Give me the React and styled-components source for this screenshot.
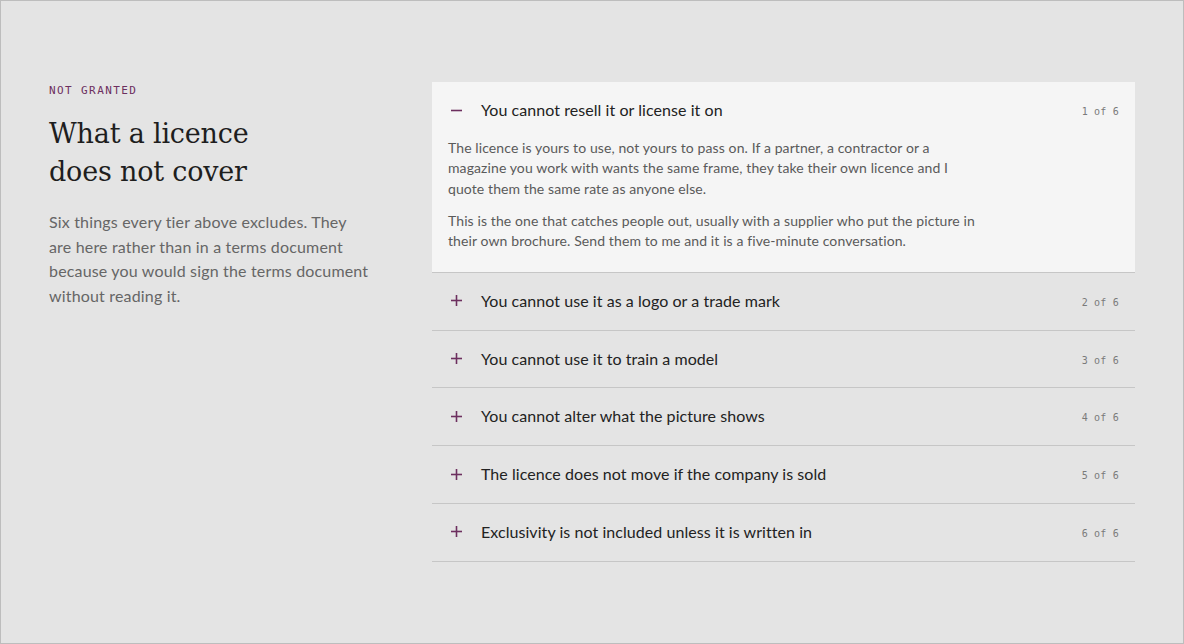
import { useState } from "react";
import styled, { createGlobalStyle } from "styled-components";

const GlobalStyle = createGlobalStyle`
  html, body {
    margin: 0;
    padding: 0;
    background: #e4e4e4;
  }
  * {
    box-sizing: border-box;
  }
`

const Page = styled.div`
  min-height: 100vh;
  border: 1px solid #bdbdbd;
  background: #e4e4e4;
  padding: 81px 48px 40px 48px;
  display: grid;
  grid-template-columns: 320px 1fr;
  column-gap: 63px;
  align-items: start;
  font-family: Lato, "Noto Sans", sans-serif;
`

const Intro = styled.div`
  display: flex;
  flex-direction: column;
`

const Eyebrow = styled.div`
  font-family: "DejaVu Sans Mono", "Liberation Mono", monospace;
  font-size: 11px;
  line-height: 18px;
  letter-spacing: 1.4px;
  color: #6d2f5f;
  text-transform: uppercase;
`

const Heading = styled.h2`
  margin: 15px 0 0 0;
  font-family: "DejaVu Serif", "Liberation Serif", serif;
  font-weight: 400;
  font-size: 27px;
  line-height: 38px;
  letter-spacing: -0.2px;
  color: #1e1e1e;
`

const Lede = styled.p`
  margin: 19px 0 0 0;
  font-size: 16px;
  line-height: 24.7px;
  letter-spacing: 0.17px;
  color: #666666;
`

const List = styled.div`
  display: flex;
  flex-direction: column;
`

const Item = styled.div`
  background: ${(p) => (p.$open ? "#f5f5f5" : "transparent")};
  border-bottom: 1px solid #c6c6c6;
`

const Header = styled.button`
  width: 100%;
  display: flex;
  align-items: center;
  gap: 17px;
  padding: 16px 16px 16.8px 16px;
  border: none;
  background: none;
  cursor: pointer;
  text-align: left;
  font-family: inherit;

  &:focus {
    outline: none;
  }
`

const Sign = styled.span`
  width: 16px;
  display: flex;
  justify-content: center;
  color: #6d2f5f;
`

const Title = styled.span`
  flex: 1;
  font-size: 16px;
  line-height: 24px;
  letter-spacing: 0.06px;
  color: #222222;
`

const Count = styled.span`
  margin-top: 3px;
  font-family: "DejaVu Sans Mono", "Liberation Mono", monospace;
  font-size: 10px;
  letter-spacing: 0.2px;
  color: #7a7a7a;
  white-space: pre;
`

const Body = styled.div`
  margin-top: -1px;
  padding: 0 16px 20px 16px;
  max-width: 567px;

  p {
    margin: 0 0 11.5px 0;
    font-size: 14px;
    line-height: 20.5px;
    letter-spacing: 0.1px;
    color: #5a5a5a;
  }

  p:last-child {
    margin-bottom: 0;
  }
`

const PlusMinus = ({ open }) => (
  <svg width="11" height="11" viewBox="0 0 11 11">
    <path d="M0 5.5h11" stroke="currentColor" strokeWidth="1.6" />
    {!open && <path d="M5.5 0v11" stroke="currentColor" strokeWidth="1.6" />}
  </svg>
)

const items = [
  {
    title: "You cannot resell it or license it on",
    body: [
      "The licence is yours to use, not yours to pass on. If a partner, a contractor or a magazine you work with wants the same frame, they take their own licence and I quote them the same rate as anyone else.",
      "This is the one that catches people out, usually with a supplier who put the picture in their own brochure. Send them to me and it is a five-minute conversation.",
    ],
  },
  { title: "You cannot use it as a logo or a trade mark", body: [] },
  { title: "You cannot use it to train a model", body: [] },
  { title: "You cannot alter what the picture shows", body: [] },
  { title: "The licence does not move if the company is sold", body: [] },
  { title: "Exclusivity is not included unless it is written in", body: [] },
]

const App = () => {
  const [open, setOpen] = useState(0)

  return (
    <>
      <GlobalStyle />
      <Page>
        <Intro>
          <Eyebrow>Not granted</Eyebrow>
          <Heading>What a licence<br />does not cover</Heading>
          <Lede>
            Six things every tier above excludes. They are here rather than in a
            terms document because you would sign the terms document without
            reading it.
          </Lede>
        </Intro>
        <List>
          {items.map((item, i) => (
            <Item key={item.title} $open={open === i}>
              <Header onClick={() => setOpen(open === i ? -1 : i)}>
                <Sign><PlusMinus open={open === i} /></Sign>
                <Title>{item.title}</Title>
                <Count>{`${i + 1} of ${items.length}`}</Count>
              </Header>
              {open === i && item.body.length > 0 && (
                <Body>
                  {item.body.map((text) => <p key={text}>{text}</p>)}
                </Body>
              )}
            </Item>
          ))}
        </List>
      </Page>
    </>
  )
}

export default App
